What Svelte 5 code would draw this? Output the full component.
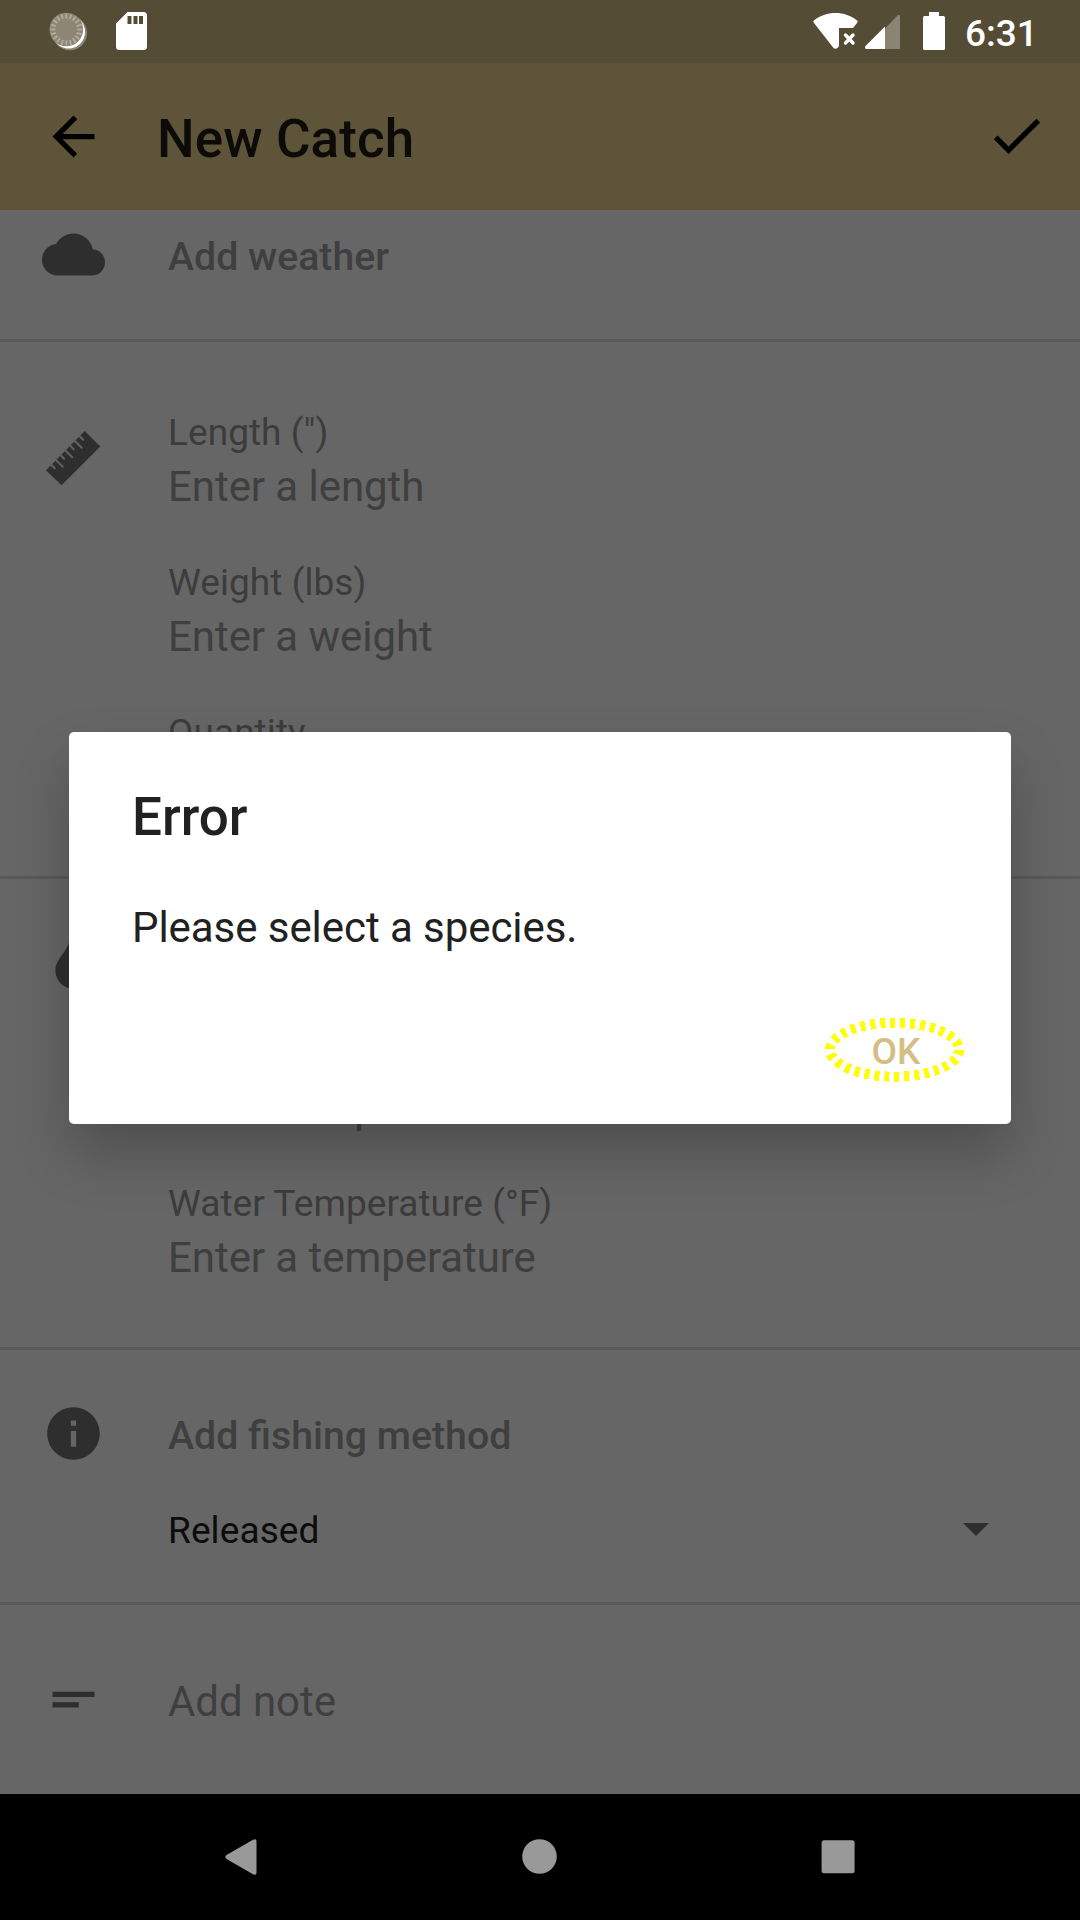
<script>
  const measurements = [
    { label: 'Length (")', value: 'Enter a length' },
    { label: 'Weight (lbs)', value: 'Enter a weight' },
    { label: 'Quantity', value: '' }
  ];
  // angles of the ticks around the status indicator
  const rays = Array.from({ length: 20 }, (_, i) => i * 18);
</script>

<div class="screen">
  <header class="status">
    <svg class="sync" viewBox="0 0 40 40">
      <circle cx="20.8" cy="21" r="17.3" fill="#8d8675" />
      <circle cx="19.600" cy="20" r="16.500" fill="#fff" />
      <circle cx="17.300" cy="17.500" r="16.800" fill="#8d8675" />
      {#each rays as angle}
        <path d="M17.300 1.500v5" stroke="#b3ad9d" stroke-width="1.800" transform="rotate({angle} 17.3 17.5)" />
      {/each}
    </svg>
    <svg class="sd" viewBox="0 0 32 38">
      <path fill="#fff" fill-rule="evenodd" d="M11.5 0H27.500Q31 0 31 3.500V34.500Q31 38 27.500 38H3.500Q0 38 0 34.500V11.500ZM11.500 4v8h4V4ZM17.500 4v8h4V4ZM23 4v8h4V4Z" />
    </svg>
    <span class="spacer"></span>
    <svg class="wifi" viewBox="0 0 46 38">
      <path fill="#fff" d="M.8 7.500C7 2.500 14.500 0 22.500 0S38 2.500 44.200 7.500Q45.200 8.500 44 10L40 15H26V33L24.500 35Q22.500 36.500 20.500 35L1 10Q-.2 8.500 .8 7.500Z" />
      <path d="M32.500 22l7.500 8M40 22l-7.500 8" stroke="#fff" stroke-width="3.400" stroke-linecap="round" />
    </svg>
    <svg class="cell" viewBox="0 0 36 36">
      <path fill="#8a8473" d="M20 14.500L32.500 1.500Q35 -.5 35 2.500V35H20Z" />
      <path fill="#fff" d="M20 12.500V35H1.500Q-1 35 .5 32Z" />
    </svg>
    <svg class="battery" viewBox="0 0 22 38">
      <path fill="#fff" d="M6 0H16V4H20.500Q22 4 22 5.500V36.500Q22 38 20.500 38H1.500Q0 38 0 36.500V5.500Q0 4 1.500 4H6Z" />
    </svg>
    <time>6:31</time>
  </header>

  <div class="appbar">
    <svg class="back" viewBox="0 0 24 24"><path d="M20 11H7.830l5.590-5.590L12 4l-8 8 8 8 1.410-1.410L7.830 13H20v-2z" /></svg>
    <h1>New Catch</h1>
    <svg class="check" viewBox="0 0 24 24"><path d="M9 16.170L4.830 12l-1.420 1.410L9 19 21 7l-1.410-1.410z" /></svg>
  </div>

  <main>
    <section class="weather">
      <svg class="icon" viewBox="0 0 24 24"><path d="M19.350 10.040C18.670 6.590 15.640 4 12 4 9.110 4 6.600 5.640 5.350 8.040 2.340 8.360 0 10.910 0 14c0 3.310 2.690 6 6 6h13c2.760 0 5-2.240 5-5 0-2.640-2.050-4.780-4.650-4.960z" /></svg>
      <strong>Add weather</strong>
    </section>

    <section class="measure">
      <svg class="icon" viewBox="0 0 63 63">
        <path d="M42.700 4L58.300 19.500 19.500 58.300 4 43.200Z" />
        <g stroke="#626262" stroke-width="2" stroke-linecap="round">
          <path d="M8.700 37.300l4 4M13.500 32.500l7.200 7.200M18.200 27.800l4 4M23 23l7.200 7.200M27.700 18.300l4 4M32.500 13.500l7.200 7.200M37.200 8.800l4 4" />
        </g>
      </svg>
      <div class="fields">
        {#each measurements as field}
          <div class="field">
            <label>{field.label}</label>
            <p>{field.value}</p>
          </div>
        {/each}
      </div>
    </section>

    <section class="water">
      <svg class="icon" viewBox="-131 -51 614 614"><path d="M205.220 22.090c-7.940-28.780-49.440-30.120-58.440 0C100.010 179.850 0 222.720 0 333.910 0 432.350 78.720 512 176 512s176-79.650 176-178.090c0-111.750-99.790-153.340-146.780-311.820z" /></svg>
      <div class="fields">
        <div class="field"><p>Enter a depth</p></div>
        <div class="field">
          <label>Water Temperature (°F)</label>
          <p>Enter a temperature</p>
        </div>
      </div>
    </section>

    <section class="method">
      <svg class="icon" viewBox="0 0 24 24"><path d="M12 2C6.480 2 2 6.480 2 12s4.480 10 10 10 10-4.480 10-10S17.520 2 12 2zm1 15h-2v-6h2v6zm0-8h-2V7h2v2z" /></svg>
      <div class="stack">
        <strong>Add fishing method</strong>
        <div class="select">
          <span>Released</span>
          <svg class="caret" viewBox="0 0 26 13"><path d="M0 0H26L13 13Z" /></svg>
        </div>
      </div>
    </section>

    <section class="note">
      <svg class="icon" viewBox="0 0 24 24"><path d="M4 9h16v2H4zm0 4h10v2H4z" /></svg>
      <p>Add note</p>
    </section>
  </main>

  <nav>
    <svg viewBox="0 0 36 36"><path d="M29 .8Q32.500 -1 32.500 2.500V33.500Q32.500 37 29 35.200L2.500 20Q.2 18 2.500 16Z" /></svg>
    <svg viewBox="0 0 36 36"><circle cx="17.500" cy="17.500" r="17.300" /></svg>
    <svg viewBox="0 0 36 36"><rect x=".6" y="1.300" width="33" height="33" rx="2.500" /></svg>
  </nav>

  <div class="dialog" role="alertdialog">
    <h2>Error</h2>
    <p>Please select a species.</p>
    <div class="actions">
      <button>
        <span>OK</span>
        <svg class="ring" viewBox="0 0 140 66"><ellipse cx="69.500" cy="32.700" rx="64.500" ry="27" /></svg>
      </button>
    </div>
  </div>
</div>

<style>
  :global(body) { margin: 0; background: #666; }
  .screen {
    position: relative; width: 1080px; height: 1920px; overflow: hidden;
    display: flex; flex-direction: column;
    background: #666; font-family: Roboto, sans-serif; color: #3f3f3f;
  }
  svg { display: block; flex: none; }
  h1, h2, p { margin: 0; }
  .status { height: 63px; display: flex; align-items: flex-start; background: #544c35; box-sizing: border-box; padding: 12px 43px 0 49px; }
  .sync { width: 40px; height: 40px; }
  .sd { width: 32px; height: 38px; margin-left: 27px; }
  .spacer { flex: 1; }
  .wifi { width: 46px; height: 38px; margin-top: 1px; }
  .cell { width: 36px; height: 36px; margin: 2px 0 0 6px; }
  .battery { width: 22px; height: 38px; margin-left: 22px; }
  time { color: #fff; font-size: 37px; font-weight: 500; line-height: 44px; width: 72px; margin-left: 20px; white-space: nowrap; }

  .appbar { height: 147px; display: flex; align-items: center; box-sizing: border-box; padding: 0 32px 0 42px; background: #5e5439; }
  .back, .check { width: 63px; height: 63px; fill: #000; }
  .back { margin-right: 52px; }
  .check { margin-bottom: 2px; }
  h1 { flex: 1; font-size: 53px; font-weight: 500; line-height: 62px; letter-spacing: .1px; color: #0c0b07; padding-top: 5px; }

  main { flex: 1; display: flex; flex-direction: column; }
  section { display: flex; align-items: flex-start; box-sizing: border-box; padding-left: 42px; border-bottom: 3px solid #595959; }
  .icon { width: 63px; height: 63px; margin-right: 63px; fill: #2e2e2e; }
  strong { font-size: 39.250px; font-weight: 500; line-height: 46px; }
  section p { font-size: 42px; line-height: 50px; letter-spacing: -.06px; white-space: nowrap; }
  label { display: block; font-size: 37px; line-height: 44px; letter-spacing: .05px; white-space: nowrap; color: #3c3c3c; }
  .fields { display: flex; flex-direction: column; gap: 49px; }
  .field { display: flex; flex-direction: column; gap: 7px; }

  .weather { height: 132px; padding-top: 13px; }
  .weather strong { padding-top: 11px; }
  .measure { height: 537px; padding-top: 69px; overflow: hidden; }
  .measure .icon { margin-top: 16px; }
  .water { height: 471px; padding-top: 52px; }
  .water .fields { padding-top: 152px; }
  .method { height: 255px; padding-top: 52px; }
  .stack { flex: 1; padding-top: 11px; }
  .stack strong { display: block; }
  .select { display: flex; align-items: flex-start; justify-content: space-between; height: 44px; margin: 49px 91.500px 0 0; }
  .select span { font-size: 37px; line-height: 44px; letter-spacing: .1px; color: #0c0c0c; padding-top: 1px; }
  .caret { width: 26px; height: 13px; margin-top: 15px; fill: #2e2e2e; }
  .note { flex: 1; border-bottom: 0; padding-top: 63px; }
  .note p { padding-top: 9px; }

  nav { height: 126px; display: flex; align-items: flex-start; justify-content: center; gap: 262.500px; padding-top: 45px; box-sizing: border-box; background: #000; }
  nav svg { width: 36px; height: 36px; fill: #999; }

  .dialog {
    position: absolute; left: 69px; top: 732px; width: 942px; height: 392px;
    box-sizing: border-box; padding: 54px 42px 0 63px; border-radius: 5px;
    background: #fff; color: #212121; box-shadow: 0 30px 56px rgba(0, 0, 0, .23);
  }
  h2 { font-size: 53px; font-weight: 500; line-height: 62px; }
  .dialog p { font-size: 42px; line-height: 50px; letter-spacing: -.06px; margin-top: 55px; }
  .actions { display: flex; justify-content: flex-end; margin-top: 50px; }
  button {
    position: relative; width: 146px; height: 94px; padding: 2px 0 0; border: 0; background: none;
    font: 500 37px/94px Roboto, sans-serif; color: #d4be84;
  }
  .ring { position: absolute; left: 2px; top: 14px; width: 140px; height: 66px; fill: none; stroke: #ff0; stroke-width: 10; stroke-dasharray: 5 5; shape-rendering: crispEdges; }
</style>
